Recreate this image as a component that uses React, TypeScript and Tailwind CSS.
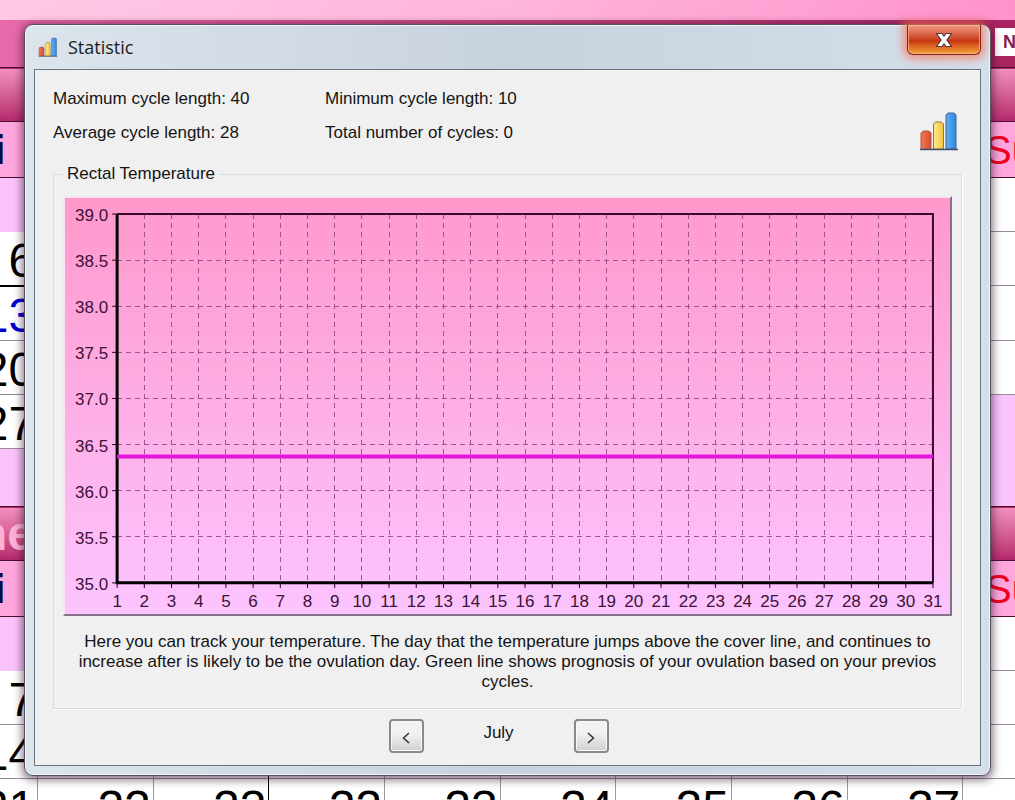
import React from 'react';

const DAYS = Array.from({ length: 31 }, (_, i) => i + 1);
const TEMPERATURES = ['39.0', '38.5', '38.0', '37.5', '37.0', '36.5', '36.0', '35.5', '35.0'];

const PLOT = { left: 52, right: 866, top: 16, bottom: 384 };
const STEP_X = (PLOT.right - PLOT.left) / 30;
const STEP_Y = (PLOT.bottom - PLOT.top) / 8;

interface WeekRow {
  days: string[];
  filledLeft: boolean;
  filledRight: boolean;
  highlight?: boolean;
}

const UPPER_WEEKS: WeekRow[] = [
  { days: [], filledLeft: false, filledRight: true },
  { days: ['6'], filledLeft: true, filledRight: true },
  { days: ['13'], filledLeft: true, filledRight: true, highlight: true },
  { days: ['20'], filledLeft: true, filledRight: true },
  { days: ['27'], filledLeft: true, filledRight: false },
  { days: [], filledLeft: false, filledRight: false },
];

const LOWER_WEEKS: WeekRow[] = [
  { days: [], filledLeft: false, filledRight: true },
  { days: ['7'], filledLeft: true, filledRight: true },
  { days: ['14'], filledLeft: true, filledRight: true },
  {
    days: ['21', '22', '23', '22', '23', '24', '25', '26', '27'],
    filledLeft: true,
    filledRight: true,
  },
];

const COLUMNS = Array.from({ length: 10 }, (_, i) => i);

const isFilled = (week: WeekRow, column: number) => (column < 3 ? week.filledLeft : week.filledRight);

// a rule is drawn above a cell only when the cell over it holds a day
const topRule = (weeks: WeekRow[], row: number, column: number) => {
  if (weeks[row].highlight && column < 3) return 'border-t-2 border-t-black';
  if (row > 0 && isFilled(weeks[row - 1], column)) return 'border-t border-t-[#9a8a98]';
  return '';
};

const MonthTable: React.FC<{ name: string; weeks: WeekRow[] }> = ({ name, weeks }) => (
  <table className="w-full table-fixed border-collapse">
    <thead>
      <tr className="h-[54px] border-y border-[#4a1030] bg-linear-to-b from-[#f28fc0] to-[#b3286a]">
        <th colSpan={10} className="p-0 text-left text-5xl leading-[52px] font-bold text-[#ffb0d8]">
          {name}
        </th>
      </tr>
      <tr className="h-14 border-b border-[#4a1030] bg-[#ffa6dc]">
        {COLUMNS.map((column) => (
          <th key={column} className="p-0 text-[40px] leading-[54px]">
            {column === 0 && <span className="font-bold text-[#0c0c3c]">Fri</span>}
            {column === 9 && <span className="font-normal text-[#f00020]">Sun</span>}
          </th>
        ))}
      </tr>
    </thead>
    <tbody>
      {weeks.map((week, row) => (
        <tr key={row}>
          {COLUMNS.map((column) => (
            <td
              key={column}
              className={`h-[54px] border-r p-0 pt-1 pr-0.5 text-right text-5xl leading-[49px] ${
                column === 2 ? 'border-r-black' : 'border-r-[#9a9a9a]'
              } ${topRule(weeks, row, column)} ${isFilled(week, column) ? 'bg-white' : 'bg-[#fac3fb]'} ${
                week.highlight ? 'text-[#0000d0]' : 'text-black'
              }`}
            >
              {week.days[column]}
            </td>
          ))}
        </tr>
      ))}
    </tbody>
  </table>
);

const CalendarPage: React.FC = () => (
  <div className="h-screen overflow-hidden bg-white" aria-hidden="true">
    <div className="h-5 bg-linear-to-r from-[#ffc9e6] via-[#ffb5dc] to-[#ff92cb]" />
    <div className="flex h-[47px] items-start justify-end bg-linear-to-r from-[#e96aab] to-[#a8235f] pt-2">
      <div className="h-7 w-5 overflow-hidden bg-white pl-2 text-lg leading-7 font-bold text-[#8c1c50]">N</div>
    </div>
    {/* the two months are wider than the window and scrolled sideways */}
    <div className="-mr-16 -ml-[78px] flex flex-col gap-1 bg-[#fac3fb]">
      <MonthTable name="" weeks={UPPER_WEEKS} />
      <MonthTable name="June" weeks={LOWER_WEEKS} />
    </div>
  </div>
);

const BarsIcon: React.FC<{ className: string }> = ({ className }) => (
  <svg viewBox="0 0 38 40" className={className} aria-hidden="true">
    <defs>
      <linearGradient id="barRed" x1="0" x2="1">
        <stop offset="0" stopColor="#f07a58" />
        <stop offset="1" stopColor="#dc4a2c" />
      </linearGradient>
      <linearGradient id="barYellow" x1="0" x2="1">
        <stop offset="0" stopColor="#ffe98a" />
        <stop offset="1" stopColor="#f3c440" />
      </linearGradient>
      <linearGradient id="barBlue" x1="0" x2="1">
        <stop offset="0" stopColor="#62aef5" />
        <stop offset="1" stopColor="#2f86e0" />
      </linearGradient>
    </defs>
    <path d="M1 38V22l2-2h6l2 2v16z" fill="url(#barRed)" stroke="#a5584a" />
    <path d="M13.500 38V13l2-2h6l2 2v25z" fill="url(#barYellow)" stroke="#8a7a4a" />
    <path d="M26 38V4l2-2h6l2 2v34z" fill="url(#barBlue)" stroke="#3b6490" />
    <path d="M0 38.500h38" stroke="#3f4f70" strokeWidth="1.500" />
  </svg>
);

const TemperatureChart: React.FC = () => (
  <svg
    viewBox="0 0 883 415"
    className="block w-full text-[17px]"
    role="img"
    aria-label="Rectal temperature by day"
  >
    <defs>
      <linearGradient id="chartFill" x1="0" y1="0" x2="0" y2="1">
        <stop offset="0" stopColor="#ff98cb" />
        <stop offset="1" stopColor="#fcc4ff" />
      </linearGradient>
    </defs>
    <rect width="883" height="415" fill="url(#chartFill)" />
    <g stroke="#9c5590" strokeWidth="1" strokeDasharray="5 4" shapeRendering="crispEdges">
      {DAYS.slice(1, -1).map((day) => {
        const x = PLOT.left + (day - 1) * STEP_X;
        return <line key={day} x1={x} x2={x} y1={PLOT.top} y2={PLOT.bottom} />;
      })}
      {TEMPERATURES.slice(1, -1).map((label, i) => {
        const y = PLOT.top + (i + 1) * STEP_Y;
        return <line key={label} x1={PLOT.left} x2={PLOT.right} y1={y} y2={y} />;
      })}
    </g>
    <path
      d={`M${PLOT.left} ${PLOT.top}H${PLOT.right}V${PLOT.bottom}`}
      fill="none"
      stroke="#3a0a2c"
      strokeWidth="2"
    />
    <path d={`M${PLOT.left} ${PLOT.top}V${PLOT.bottom}H${PLOT.right}`} fill="none" stroke="#000" strokeWidth="3" />
    <g stroke="#1c0818" strokeWidth="1">
      {DAYS.map((day) => {
        const x = PLOT.left + (day - 1) * STEP_X;
        return <line key={day} x1={x} x2={x} y1={PLOT.bottom} y2={PLOT.bottom + 5} />;
      })}
      {TEMPERATURES.map((label, i) => {
        const y = PLOT.top + i * STEP_Y;
        return <line key={label} x1={PLOT.left - 5} x2={PLOT.left} y1={y} y2={y} />;
      })}
    </g>
    <line x1={PLOT.left} x2={PLOT.right} y1="258" y2="258" stroke="#e614dc" strokeWidth="4" />
    <g fill="#3c1238">
      {TEMPERATURES.map((label, i) => (
        <text key={label} x="43" y={PLOT.top + i * STEP_Y + 7} textAnchor="end">
          {label}
        </text>
      ))}
      {DAYS.map((day) => (
        <text key={day} x={PLOT.left + (day - 1) * STEP_X} y="408" textAnchor="middle">
          {day}
        </text>
      ))}
    </g>
  </svg>
);

const MonthButton: React.FC<{ label: string; direction: 'left' | 'right' }> = ({ label, direction }) => (
  <button
    type="button"
    aria-label={label}
    className="flex h-[34px] w-[35px] items-center justify-center rounded-[4px] border-2 border-[#8a8a8a] bg-linear-to-b from-[#f2f2f2] from-40% to-[#d0d0d0] shadow-[inset_0_0_0_1px_#fafafa]"
  >
    <svg viewBox="0 0 8 12" className="mt-1 h-3 w-2" fill="none" stroke="#333" strokeWidth="1.500">
      <path d={direction === 'left' ? 'M7 1 1.500 6 7 11' : 'M1 1l5.500 5L1 11'} />
    </svg>
  </button>
);

const StatisticDialog: React.FC = () => (
  <section
    role="dialog"
    aria-labelledby="dialog-title"
    className="absolute inset-x-6 top-6 rounded-[9px] border border-[#55505c] bg-linear-to-r from-[#dce4ec] via-[#c8d2df] to-[#d3dfea] px-[9px] pb-[9px] shadow-[inset_0_0_0_1px_#f0f5fa,0_2px_8px_2px_rgba(40,10,40,0.55)]"
  >
    <header className="flex h-11 items-start justify-between">
      <div className="flex h-11 items-center gap-2.5 pl-1">
        <BarsIcon className="h-5 w-5" />
        <h1 id="dialog-title" className="font-['Open_Sans',sans-serif] text-lg leading-6 text-[#1c1c24]">
          Statistic
        </h1>
      </div>
      <button
        type="button"
        aria-label="Close"
        className="flex h-[30px] w-[74px] items-center justify-center rounded-b-md border border-t-0 border-[#7a2418] bg-linear-to-b from-[#ee9a80] via-[#c83410] via-55% to-[#f7a23c] shadow-[inset_0_0_0_1px_rgba(255,200,160,0.6),0_0_9px_4px_rgba(255,110,80,0.7)]"
      >
        <svg viewBox="0 0 18 16" className="h-4 w-[18px]">
          <path
            d="M1.500 1.500H7L9 4l2-2.500h5.500L12 8l4.500 6.500H11L9 12l-2 2.500H1.500L6 8z"
            fill="#fff"
            stroke="#5c3838"
            strokeWidth="1.200"
          />
        </svg>
      </button>
    </header>

    <div className="border border-[#6a747e] bg-[#f0f0f0] px-[18px] pb-3">
      <div className="flex items-start justify-between pt-[17px] pr-1">
        <div className="grid grid-cols-[272px_auto] gap-y-2.5">
          <p>Maximum cycle length: 40</p>
          <p>Minimum cycle length: 10</p>
          <p>Average cycle length: 28</p>
          <p>Total number of cycles: 0</p>
        </div>
        <BarsIcon className="mt-6 h-10 w-[38px]" />
      </div>

      <fieldset className="mt-[11px] border border-[#dcdcdc] px-[9px] pb-4 shadow-[1px_1px_0_#fff]">
        <legend className="px-1">Rectal Temperature</legend>
        <div className="mt-2.5 border-2 border-t-[#f8e4ee] border-r-[#86708a] border-b-[#86708a] border-l-[#f8e4ee]">
          <TemperatureChart />
        </div>
        <p className="mt-4 text-center leading-5">
          Here you can track your temperature. The day that the temperature jumps above the cover line, and continues to
          <br />
          increase after is likely to be the ovulation day. Green line shows prognosis of your ovulation based on your
          previos
          <br />
          cycles.
        </p>
      </fieldset>

      <div className="mt-2.5 flex items-start justify-center pr-[18px]">
        <MonthButton label="Previous month" direction="left" />
        <p className="w-[150px] text-center leading-7">July</p>
        <MonthButton label="Next month" direction="right" />
      </div>
    </div>
  </section>
);

const App: React.FC = () => (
  <main className="relative overflow-hidden font-['Liberation_Sans',Arial,sans-serif] text-[17px] leading-6 text-[#141414]">
    <CalendarPage />
    <StatisticDialog />
  </main>
);

export default App;
